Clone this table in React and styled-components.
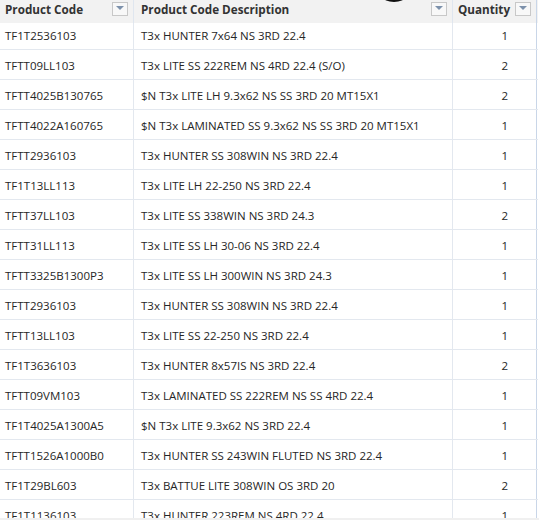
import React from "react";
import styled, { createGlobalStyle } from "styled-components";

const GlobalStyle = createGlobalStyle`
  html, body {
    margin: 0;
    padding: 0;
    background: #ffffff;
    overflow: hidden;
  }
  body {
    font-family: "Open Sans", "Noto Sans", sans-serif;
  }
`;

const rows = [
  ["TF1T2536103", "T3x HUNTER 7x64 NS 3RD 22.4", 1],
  ["TFTT09LL103", "T3x LITE SS 222REM NS 4RD 22.4 (S/O)", 2],
  ["TFTT4025B130765", "$N T3x LITE LH 9.3x62 NS SS 3RD 20 MT15X1", 2],
  ["TFTT4022A160765", "$N T3x LAMINATED SS 9.3x62 NS SS 3RD 20 MT15X1", 1],
  ["TFTT2936103", "T3x HUNTER SS 308WIN NS 3RD 22.4", 1],
  ["TF1T13LL113", "T3x LITE LH 22-250 NS 3RD 22.4", 1],
  ["TFTT37LL103", "T3x LITE SS 338WIN NS 3RD 24.3", 2],
  ["TFTT31LL113", "T3x LITE SS LH 30-06 NS 3RD 22.4", 1],
  ["TFTT3325B1300P3", "T3x LITE SS LH 300WIN NS 3RD 24.3", 1],
  ["TFTT2936103", "T3x HUNTER SS 308WIN NS 3RD 22.4", 1],
  ["TFTT13LL103", "T3x LITE SS 22-250 NS 3RD 22.4", 1],
  ["TF1T3636103", "T3x HUNTER 8x57IS NS 3RD 22.4", 2],
  ["TFTT09VM103", "T3x LAMINATED SS 222REM NS SS 4RD 22.4", 1],
  ["TF1T4025A1300A5", "$N T3x LITE 9.3x62 NS 3RD 22.4", 1],
  ["TFTT1526A1000B0", "T3x HUNTER SS 243WIN FLUTED NS 3RD 22.4", 1],
  ["TF1T29BL603", "T3x BATTUE LITE 308WIN OS 3RD 20", 2],
  ["TF1T1136103", "T3x HUNTER 223REM NS 4RD 22.4", 1],
];

const columns = "134px 319px 84px";

const Page = styled.div`
  position: relative;
  width: 539px;
  height: 520px;
  display: flex;
  flex-direction: column;
  overflow: hidden;
`;

const Table = styled.div`
  width: 538px;
  flex: 1;
  display: flex;
  flex-direction: column;
  overflow: hidden;
`;

const HeaderRow = styled.div`
  display: grid;
  grid-template-columns: ${columns};
  height: 23px;
  background: #f2f2f2;
  flex-shrink: 0;
`;

const HeaderCell = styled.div`
  display: flex;
  align-items: center;
  justify-content: space-between;
  padding: 0 5px 5px ${(p) => p.$pad || 5}px;
  border-right: 1px solid ${(p) => (p.$last ? "#c9d6e8" : "#dfe6ef")};
  font-size: 11.7px;
  font-weight: 700;
  color: #333333;
  white-space: nowrap;
`;

const FilterButton = styled.div`
  width: 16px;
  height: 14px;
  box-sizing: border-box;
  border: 1px solid #c8c8c8;
  background: #f8f8f8;
  display: flex;
  justify-content: center;
  padding-top: 3px;
  margin-top: -1px;
`;

const Arrow = styled.div`
  width: 0;
  height: 0;
  border-left: 4px solid transparent;
  border-right: 4px solid transparent;
  border-top: 4px solid #7d91ab;
`;

const Viewport = styled.div`
  flex: 1;
  overflow: hidden;
`;

const Body = styled.div`
  margin-top: -3px;
`;

const Row = styled.div`
  display: grid;
  grid-template-columns: ${columns};
  height: 30px;
  box-sizing: border-box;
  border-bottom: 1px solid #e3e8ef;
`;

const Cell = styled.div`
  display: flex;
  align-items: center;
  justify-content: ${(p) => (p.$num ? "flex-end" : "flex-start")};
  padding: ${(p) => (p.$num ? "1px 28px 0 0" : `1px 6px 0 ${p.$pad || 5}px`)};
  border-right: 1px solid ${(p) => (p.$last ? "#c9d6e8" : "#e3e8ef")};
  font-size: 11.5px;
  color: #262626;
  white-space: nowrap;
  overflow: hidden;
`;

const Footer = styled.div`
  height: 2px;
  background: #f0f0f0;
  flex-shrink: 0;
`;

const Blob = styled.div`
  position: absolute;
  top: -8px;
  left: 383px;
  width: 22px;
  height: 10px;
  border-radius: 50%;
  background: #111111;
`;

const Filter = () => (
  <FilterButton>
    <Arrow />
  </FilterButton>
);

export default function App() {
  return (
    <>
      <GlobalStyle />
      <Page>
        <Table>
          <HeaderRow>
            <HeaderCell>
              Product Code <Filter />
            </HeaderCell>
            <HeaderCell $pad={7}>
              Product Code Description <Filter />
            </HeaderCell>
            <HeaderCell $last>
              Quantity <Filter />
            </HeaderCell>
          </HeaderRow>
          <Viewport>
            <Body>
              {rows.map(([code, desc, qty], i) => (
                <Row key={i}>
                  <Cell>{code}</Cell>
                  <Cell $pad={7}>{desc}</Cell>
                  <Cell $num $last>
                    {qty}
                  </Cell>
                </Row>
              ))}
            </Body>
          </Viewport>
        </Table>
        <Footer />
        <Blob />
      </Page>
    </>
  );
}
